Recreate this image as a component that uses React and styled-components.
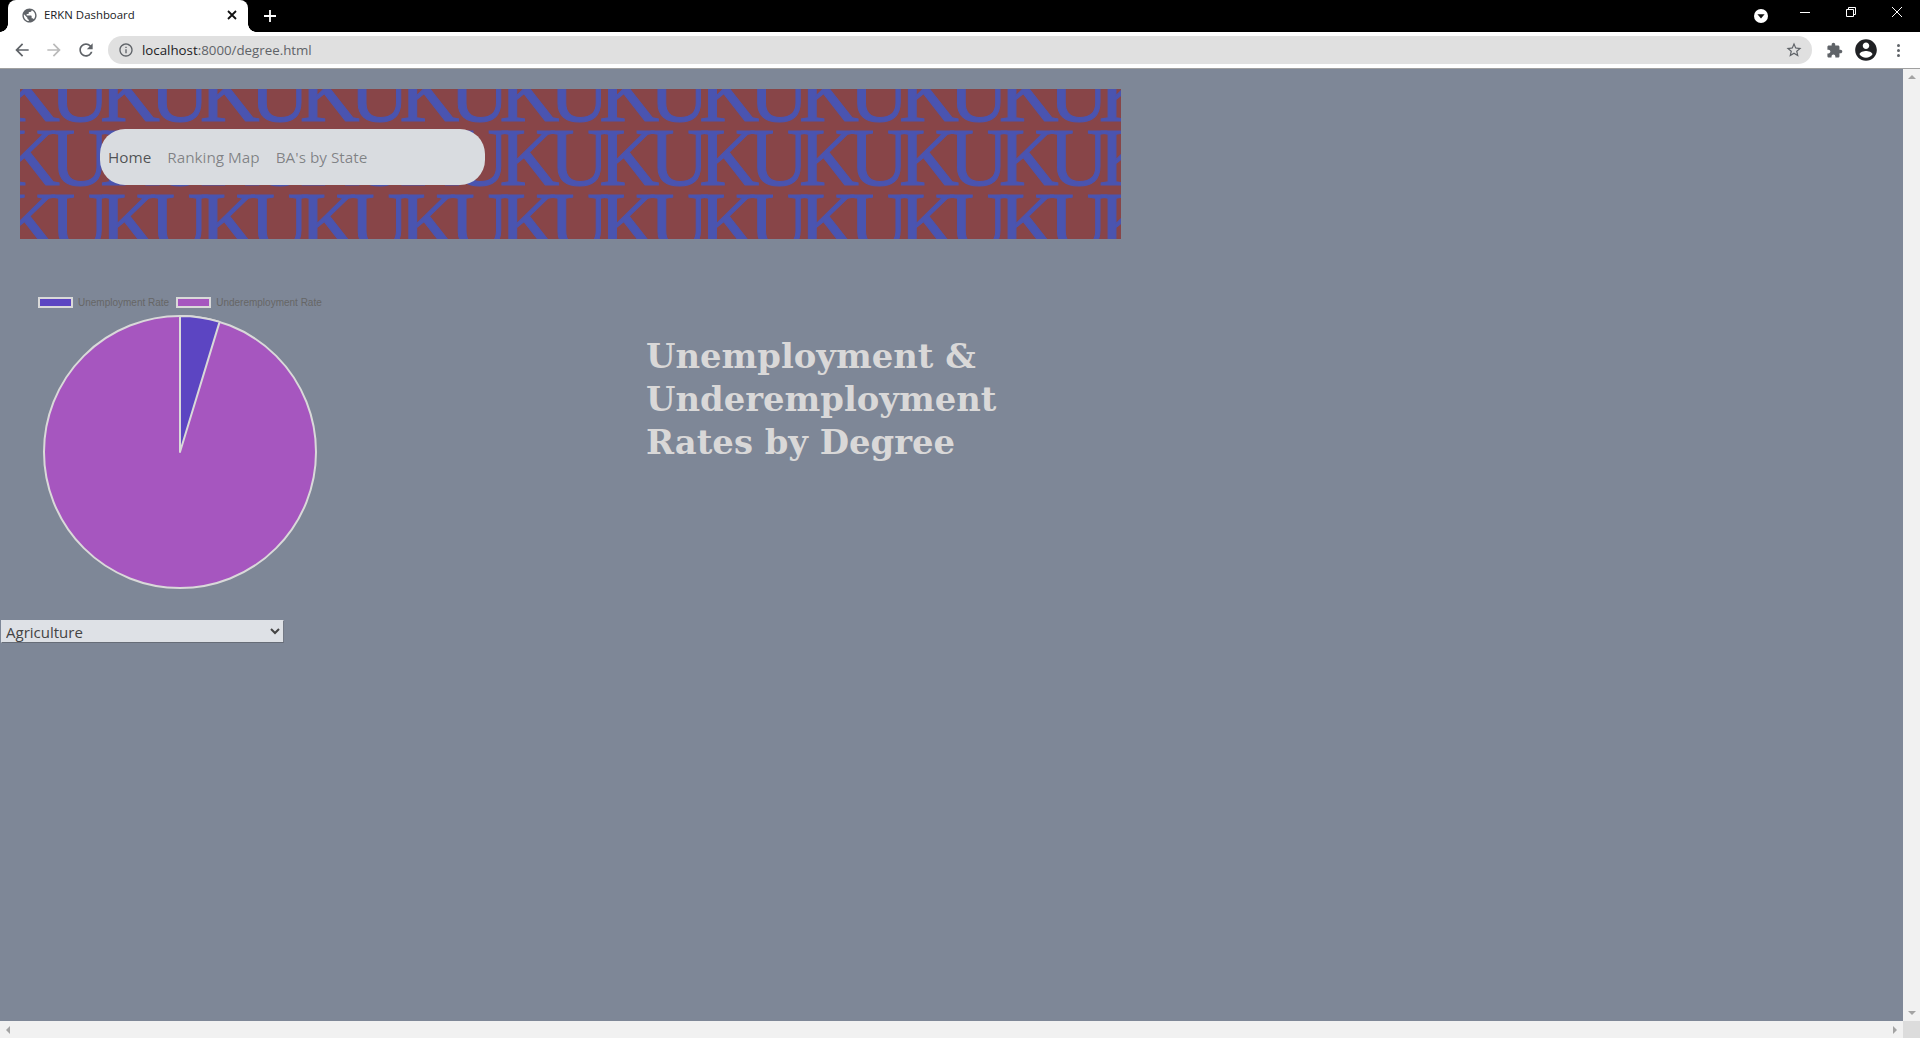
import React from 'react';
import styled, { createGlobalStyle } from 'styled-components';

const GlobalStyle = createGlobalStyle`
  html, body {
    margin: 0;
    padding: 0;
    height: 100%;
    overflow: hidden;
    background: #7e8797;
  }
`;

const UI_FONT = '"Open Sans", "Noto Sans", sans-serif';

function MaterialIcon({ d, size = 24, color = '#5f6368' }) {
  return (
    <svg width={size} height={size} viewBox="0 0 24 24" fill={color}>
      <path d={d} />
    </svg>
  );
}

const PATHS = {
  globe: 'M12 2C6.48 2 2 6.48 2 12s4.48 10 10 10 10-4.48 10-10S17.52 2 12 2zm-1 17.93c-3.95-.49-7-3.85-7-7.93 0-.62.08-1.21.21-1.79L9 15v1c0 1.1.9 2 2 2v1.93zm6.9-2.54c-.26-.81-1-1.39-1.9-1.39h-1v-3c0-.55-.45-1-1-1H8v-2h2c.55 0 1-.45 1-1V7h2c1.1 0 2-.9 2-2v-.41c2.93 1.19 5 4.06 5 7.41 0 2.08-.8 3.97-2.1 5.39z',
  back: 'M20 11H7.83l5.59-5.59L12 4l-8 8 8 8 1.41-1.41L7.83 13H20v-2z',
  forward: 'M12 4l-1.41 1.41L16.17 11H4v2h12.17l-5.58 5.59L12 20l8-8z',
  reload: 'M17.65 6.35C16.2 4.9 14.21 4 12 4c-4.42 0-7.99 3.58-7.99 8s3.57 8 7.99 8c3.73 0 6.84-2.55 7.73-6h-2.08c-.82 2.33-3.04 4-5.65 4-3.31 0-6-2.69-6-6s2.69-6 6-6c1.66 0 3.14.69 4.22 1.78L13 11h7V4l-2.35 2.35z',
  info: 'M11 7h2v2h-2zm0 4h2v6h-2zm1-9C6.48 2 2 6.48 2 12s4.48 10 10 10 10-4.48 10-10S17.52 2 12 2zm0 18c-4.41 0-8-3.59-8-8s3.59-8 8-8 8 3.59 8 8-3.59 8-8 8z',
  star: 'M22 9.24l-7.19-.62L12 2 9.19 8.63 2 9.24l5.46 4.73L5.82 21 12 17.27 18.18 21l-1.63-7.03L22 9.24zM12 15.4l-3.76 2.27 1-4.28-3.32-2.88 4.38-.38L12 6.1l1.71 4.04 4.38.38-3.32 2.88 1 4.28L12 15.4z',
  extension: 'M20.5 11H19V7c0-1.1-.9-2-2-2h-4V3.5C13 2.12 11.88 1 10.5 1S8 2.12 8 3.5V5H4c-1.1 0-1.99.9-1.99 2v3.8H3.5c1.49 0 2.7 1.21 2.7 2.7s-1.21 2.7-2.7 2.7H2V20c0 1.1.9 2 2 2h3.8v-1.5c0-1.49 1.21-2.7 2.7-2.7 1.49 0 2.7 1.21 2.7 2.7V22H17c1.1 0 2-.9 2-2v-4h1.5c1.38 0 2.5-1.12 2.5-2.5S21.88 11 20.5 11z',
  account: 'M12 2C6.48 2 2 6.48 2 12s4.48 10 10 10 10-4.48 10-10S17.52 2 12 2zm0 3c1.66 0 3 1.34 3 3s-1.34 3-3 3-3-1.34-3-3 1.34-3 3-3zm0 14.2c-2.5 0-4.71-1.28-6-3.22.03-1.99 4-3.08 6-3.08 1.99 0 5.97 1.09 6 3.08-1.29 1.94-3.5 3.22-6 3.22z',
};

// slice of the pie, 0..1 starting at 12 o'clock
function slicePath(cx, cy, r, fraction) {
  const a = fraction * 2 * Math.PI;
  const x = cx + r * Math.sin(a);
  const y = cy - r * Math.cos(a);
  return `M${cx} ${cy} L${cx} ${cy - r} A${r} ${r} 0 0 1 ${x} ${y} Z`;
}

function PieChart() {
  const c = 137;
  const r = 136;
  const share = 0.047;
  return (
    <svg width="274" height="274" viewBox="0 0 274 274">
      <circle cx={c} cy={c} r={r} fill="#a656bf" stroke="#d9d9d9" strokeWidth="2" />
      <path d={slicePath(c, c, r, share)} fill="#5c45c2" stroke="#d9d9d9" strokeWidth="2" strokeLinejoin="round" />
    </svg>
  );
}

export default function App() {
  return (
    <Frame>
      <GlobalStyle />
      <TabStrip>
        <Tab>
          <MaterialIcon d={PATHS.globe} size={17} color="#5f6368" />
          <TabTitle>ERKN Dashboard</TabTitle>
          <TabClose viewBox="0 0 10 10">
            <path d="M1 1 L9 9 M9 1 L1 9" stroke="#111" strokeWidth="1.8" />
          </TabClose>
        </Tab>
        <NewTab viewBox="0 0 12 12">
          <path d="M6 0 V12 M0 6 H12" stroke="#fff" strokeWidth="1.8" />
        </NewTab>
        <StripSpacer />
        <MediaButton viewBox="0 0 14 14">
          <circle cx="7" cy="7" r="7" fill="#fff" />
          <path d="M3.4 5.2 H10.6 L7 9.6 Z" fill="#111" />
        </MediaButton>
        <WindowButtons>
          <svg width="10" height="10" viewBox="0 0 10 10">
            <path d="M0 5.5 H10" stroke="#fff" strokeWidth="1" />
          </svg>
          <svg width="10" height="10" viewBox="0 0 10 10">
            <path d="M0.5 2.5 H7.5 V9.5 H0.5 Z M2.5 2.5 V0.5 H9.5 V7.5 H7.5" stroke="#fff" strokeWidth="1" fill="none" />
          </svg>
          <svg width="10" height="10" viewBox="0 0 10 10">
            <path d="M0 0 L10 10 M10 0 L0 10" stroke="#fff" strokeWidth="1" />
          </svg>
        </WindowButtons>
      </TabStrip>

      <Toolbar>
        <NavIcons>
          <MaterialIcon d={PATHS.back} size={20} color="#5f6368" />
          <MaterialIcon d={PATHS.forward} size={20} color="#bababa" />
          <MaterialIcon d={PATHS.reload} size={20} color="#5f6368" />
        </NavIcons>
        <Omnibox>
          <MaterialIcon d={PATHS.info} size={16} color="#5f6368" />
          <Url>
            <UrlHost>localhost</UrlHost>:8000/degree.html
          </Url>
          <OmniSpacer />
          <MaterialIcon d={PATHS.star} size={18} color="#5f6368" />
        </Omnibox>
        <ToolbarEnd>
          <MaterialIcon d={PATHS.extension} size={17} color="#5f6368" />
          <MaterialIcon d={PATHS.account} size={26} color="#202124" />
          <MenuDots>
            <i />
            <i />
            <i />
          </MenuDots>
        </ToolbarEnd>
      </Toolbar>

      <ViewportRow>
        <Page>
          <Banner>
            <Pattern aria-hidden="true">
              {[0, 1, 2, 3].map(row => (
                <PatternRow key={row}>{'KU'.repeat(12)}</PatternRow>
              ))}
            </Pattern>
            <Navbar>
              <NavLink $active>Home</NavLink>
              <NavLink>Ranking Map</NavLink>
              <NavLink>BA's by State</NavLink>
            </Navbar>
          </Banner>

          <ChartRow>
            <ChartColumn>
              <Legend>
                <LegendItem>
                  <LegendBox $color="#5c45c2" />
                  Unemployment Rate
                </LegendItem>
                <LegendItem>
                  <LegendBox $color="#a656bf" />
                  Underemployment Rate
                </LegendItem>
              </Legend>
              <PieWrap>
                <PieChart />
              </PieWrap>
            </ChartColumn>
            <Heading>
              Unemployment &amp;
              <br />
              Underemployment
              <br />
              Rates by Degree
            </Heading>
          </ChartRow>

          <DegreeSelect defaultValue="Agriculture">
            <option>Agriculture</option>
          </DegreeSelect>
        </Page>
        <VScroll>
          <ArrowUp />
          <ArrowDown />
        </VScroll>
      </ViewportRow>

      <HScrollRow>
        <HScroll>
          <ArrowLeft />
          <ArrowRight />
        </HScroll>
        <Corner />
      </HScrollRow>
    </Frame>
  );
}

const Frame = styled.div`
  display: flex;
  flex-direction: column;
  width: 100vw;
  height: 100vh;
  overflow: hidden;
  font-family: ${UI_FONT};
`;

const TabStrip = styled.div`
  display: flex;
  align-items: center;
  flex: 0 0 32px;
  height: 32px;
  padding-left: 8px;
  background: #000;
`;

const Tab = styled.div`
  position: relative;
  display: flex;
  align-items: center;
  align-self: stretch;
  box-sizing: border-box;
  width: 240px;
  padding: 0 11px 2px 13px;
  background: #fff;
  border-radius: 8px 8px 0 0;

  &::before,
  &::after {
    content: '';
    position: absolute;
    bottom: 0;
    width: 8px;
    height: 8px;
  }

  &::before {
    left: -8px;
    background: radial-gradient(circle at 0 0, #000 7.5px, #fff 8px);
  }

  &::after {
    right: -8px;
    background: radial-gradient(circle at 100% 0, #000 7.5px, #fff 8px);
  }
`;

const TabTitle = styled.span`
  flex: 1;
  margin: 0 0 2px 6px;
  font-size: 11.4px;
  color: #202124;
  white-space: nowrap;
`;

const TabClose = styled.svg`
  width: 10px;
  height: 10px;
`;

const NewTab = styled.svg`
  width: 12px;
  height: 12px;
  margin-left: 16px;
`;

const StripSpacer = styled.div`
  flex: 1;
`;

const MediaButton = styled.svg`
  width: 14px;
  height: 14px;
`;

const WindowButtons = styled.div`
  display: flex;
  gap: 36px;
  align-items: center;
  margin: -9px 18px 0 32px;
`;

const Toolbar = styled.div`
  display: flex;
  align-items: center;
  flex: 0 0 37px;
  box-sizing: border-box;
  height: 37px;
  background: #fff;
  border-bottom: 1px solid #a0a0a0;
`;

const NavIcons = styled.div`
  display: flex;
  gap: 12px;
  align-items: center;
  width: 108px;
  padding-left: 12px;
  box-sizing: border-box;
`;

const Omnibox = styled.div`
  display: flex;
  align-items: center;
  box-sizing: border-box;
  width: 1704px;
  height: 28px;
  padding: 0 9px 0 10px;
  background: #e0e0e0;
  border-radius: 14px;
`;

const Url = styled.span`
  margin-left: 8px;
  font-size: 13.3px;
  color: #5f6368;
`;

const UrlHost = styled.span`
  color: #202124;
`;

const OmniSpacer = styled.div`
  flex: 1;
`;

const ToolbarEnd = styled.div`
  display: flex;
  align-items: center;
  flex: 1;
  padding-left: 14px;
  gap: 10px;
`;

const MenuDots = styled.div`
  display: flex;
  flex-direction: column;
  gap: 2px;
  margin-left: 8px;

  i {
    display: block;
    width: 3px;
    height: 3px;
    border-radius: 50%;
    background: #5f6368;
  }
`;

const ViewportRow = styled.div`
  display: flex;
  flex: 1;
  min-height: 0;
`;

const Page = styled.div`
  flex: 1;
  min-width: 0;
  padding-top: 20px;
  background: #7e8797;
`;

const Banner = styled.div`
  position: relative;
  box-sizing: border-box;
  width: 1101px;
  height: 150px;
  margin-left: 20px;
  padding: 40px 0 0 80px;
  overflow: hidden;
  background: #884548;
`;

const Pattern = styled.div`
  position: absolute;
  top: -28px;
  left: -20px;
  user-select: none;
`;

const PatternRow = styled.div`
  height: 64px;
  font-family: "Liberation Serif", serif;
  font-size: 83px;
  line-height: 64px;
  letter-spacing: -10px;
  white-space: nowrap;
  color: #4a54b0;
  -webkit-text-stroke: 1px #4a54b0;
`;

const Navbar = styled.nav`
  position: relative;
  display: flex;
  align-items: center;
  gap: 16px;
  box-sizing: border-box;
  width: 385px;
  height: 56px;
  padding: 0 8px;
  background: #d9dce0;
  border-radius: 25px;
`;

const NavLink = styled.a`
  font-size: 15.3px;
  color: ${props => (props.$active ? 'rgba(0, 0, 0, 0.65)' : 'rgba(0, 0, 0, 0.42)')};
`;

const ChartRow = styled.div`
  display: flex;
  align-items: flex-start;
  margin-top: 58px;
`;

const ChartColumn = styled.div`
  width: 646px;
`;

const Legend = styled.div`
  display: flex;
  gap: 7px;
  height: 11px;
  padding-left: 38px;
  align-items: center;
  font-family: "Liberation Sans", Arial, sans-serif;
  font-size: 10px;
  color: #666;
`;

const LegendItem = styled.div`
  display: flex;
  align-items: center;
  gap: 5px;
`;

const LegendBox = styled.span`
  box-sizing: border-box;
  width: 35px;
  height: 11px;
  background: ${props => props.$color};
  border: 2px solid #d9d9d9;
`;

const PieWrap = styled.div`
  margin: 7px 0 0 43px;
  line-height: 0;
`;

const Heading = styled.h1`
  margin: 38px 0 0;
  font-family: "DejaVu Serif", Georgia, serif;
  font-size: 33.8px;
  font-weight: 700;
  line-height: 43px;
  color: #d9d8d8;
`;

const DegreeSelect = styled.select`
  display: block;
  box-sizing: border-box;
  width: 283px;
  height: 23px;
  margin: 31px 0 0 1px;
  padding: 0;
  border: 1px solid #dee1e6;
  border-right-color: #737985;
  border-bottom-color: #666c77;
  background: #dee1e6;
  font-family: ${UI_FONT};
  font-size: 15px;
  color: #444;
`;

const VScroll = styled.div`
  display: flex;
  flex: 0 0 17px;
  flex-direction: column;
  justify-content: space-between;
  align-items: center;
  padding: 6px 0;
  box-sizing: border-box;
  background: #f1f1f1;
`;

const HScrollRow = styled.div`
  display: flex;
  flex: 0 0 17px;
`;

const HScroll = styled.div`
  display: flex;
  flex: 1;
  justify-content: space-between;
  align-items: center;
  padding: 0 6px;
  background: #f1f1f1;
`;

const Corner = styled.div`
  width: 17px;
  background: #dcdcdc;
`;

const ArrowUp = styled.span`
  border-left: 4px solid transparent;
  border-right: 4px solid transparent;
  border-bottom: 4px solid #a3a3a3;
`;

const ArrowDown = styled.span`
  border-left: 4px solid transparent;
  border-right: 4px solid transparent;
  border-top: 4px solid #a3a3a3;
`;

const ArrowLeft = styled.span`
  border-top: 4px solid transparent;
  border-bottom: 4px solid transparent;
  border-right: 4px solid #a3a3a3;
`;

const ArrowRight = styled.span`
  border-top: 4px solid transparent;
  border-bottom: 4px solid transparent;
  border-left: 4px solid #a3a3a3;
`;
